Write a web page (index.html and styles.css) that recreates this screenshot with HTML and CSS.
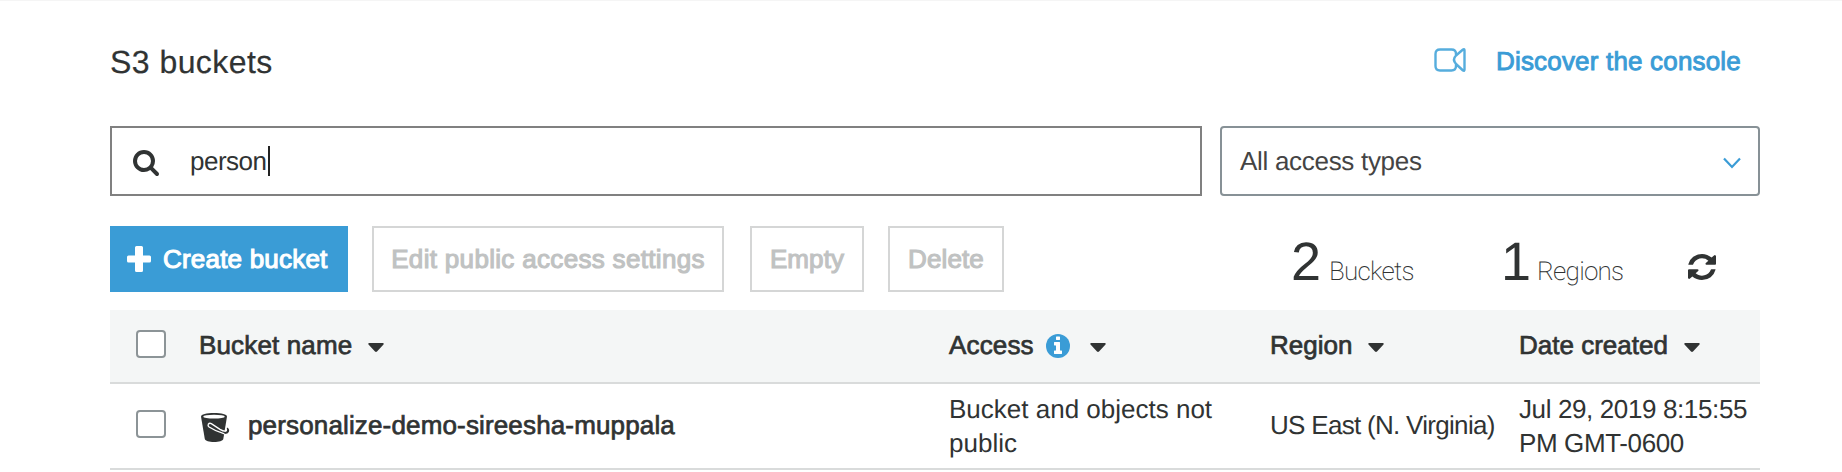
FILE: index.html
```html
<!DOCTYPE html>
<html lang="en">
<head>
<meta charset="utf-8">
<title>S3 buckets</title>
<link rel="stylesheet" href="styles.css">
</head>
<body>
<main class="page">
  <header class="top">
    <h1 class="title">S3 buckets</h1>
    <a class="discover">
      <svg class="camera" viewBox="0 0 32 24"><path d="M22 7.500V6q0-4.500-4.500-4.500H6Q1.500 1.500 1.500 6v12q0 4.500 4.500 4.500h11.500q4.500 0 4.500-4.500v-1.500M22 7.500l7-6q1.500-.8 1.500 1v19q0 1.800-1.500 1l-7-6.500q-4-4.500 0-8.500z"/></svg>
      <span class="discover-text">Discover the console</span>
    </a>
  </header>
  <section class="filters">
    <div class="search">
      <svg class="search-icon" viewBox="64 128 1664 1664"><path d="M1216 832q0-185-131.500-316.500t-316.500-131.500-316.500 131.500-131.500 316.500 131.500 316.500 316.500 131.500 316.500-131.500 131.500-316.500zm512 832q0 52-38 90t-90 38q-54 0-90-38l-343-342q-179 124-399 124-143 0-273.500-55.500t-225-150-150-225-55.500-273.500 55.500-273.500 150-225 225-150 273.500-55.500 273.500 55.500 225 150 150 225 55.500 273.500q0 220-124 399l343 343q37 37 37 90z"/></svg>
      <span class="query">person</span><span class="cursor"></span>
    </div>
    <div class="select">
      <span class="select-text">All access types</span>
      <svg class="chevron" viewBox="0 0 18 12"><path d="M1 1.500l8 8.500 8-8.500"/></svg>
    </div>
  </section>
  <section class="toolbar">
    <button class="btn primary"><svg class="plus" viewBox="0 0 24 26"><path d="M9.500 0h5q1.500 0 1.500 1.500V9.500h6.500q1.500 0 1.500 1.500v4q0 1.500-1.500 1.500H16v8q0 1.500-1.500 1.500h-5Q8 26 8 24.500v-8H1.500Q0 16.500 0 15v-4q0-1.500 1.500-1.500H8V1.500Q8 0 9.500 0z"/></svg><span>Create bucket</span></button>
    <button class="btn edit">Edit public access settings</button>
    <button class="btn empty">Empty</button>
    <button class="btn delete">Delete</button>
    <div class="stats">
      <span class="num num-buckets">2</span><span class="unit unit-buckets">Buckets</span>
      <span class="num num-regions">1</span><span class="unit">Regions</span>
    </div>
    <svg class="refresh" viewBox="0 0 1536 1536" preserveAspectRatio="none"><path d="M1511 928q0 5-1 7-64 268-268 434.500t-478 166.500q-146 0-282.500-55t-243.500-157l-129 129q-19 19-45 19t-45-19-19-45v-448q0-26 19-45t45-19h448q26 0 45 19t19 45-19 45l-137 137q71 66 161 102t187 36q134 0 250-65t186-179q11-17 53-117 8-23 30-23h192q13 0 22.500 9.500t9.500 22.500zm25-800v448q0 26-19 45t-45 19h-448q-26 0-45-19t-19-45 19-45l138-138q-148-137-349-137-134 0-250 65t-186 179q-11 17-53 117-8 23-30 23h-199q-13 0-22.500-9.500t-9.500-22.500v-7q65-268 270-434.500t480-166.500q146 0 284 55.500t245 156.500l130-129q19-19 45-19t45 19 19 45z"/></svg>
  </section>
  <section class="table">
    <div class="row head">
      <span class="check"></span>
      <div class="cell"><span class="h-name">Bucket name</span><svg class="caret" viewBox="0 0 16 9"><path d="M1 0h14q1.500.5.5 1.500L9 8.500q-1 .8-2 0L.5 1.500Q-.5.5 1 0z"/></svg></div>
      <div class="cell"><span class="h-access">Access</span><svg class="info" viewBox="128 128 1536 1536"><path class="info-bg" d="M1664 896a768 768 0 1 1-1536 0a768 768 0 1 1 1536 0z"/><path class="info-fg" d="M1152 1376v-160q0-14-9-23t-23-9h-96v-512q0-14-9-23t-23-9h-320q-14 0-23 9t-9 23v160q0 14 9 23t23 9h96v320h-96q-14 0-23 9t-9 23v160q0 14 9 23t23 9h448q14 0 23-9t9-23zm-128-896v-160q0-14-9-23t-23-9h-192q-14 0-23 9t-9 23v160q0 14 9 23t23 9h192q14 0 23-9t9-23z"/></svg><svg class="caret caret-access" viewBox="0 0 16 9"><path d="M1 0h14q1.500.5.5 1.500L9 8.500q-1 .8-2 0L.5 1.500Q-.5.5 1 0z"/></svg></div>
      <div class="cell"><span class="h-region">Region</span><svg class="caret" viewBox="0 0 16 9"><path d="M1 0h14q1.500.5.5 1.500L9 8.500q-1 .8-2 0L.5 1.500Q-.5.5 1 0z"/></svg></div>
      <div class="cell"><span class="h-date">Date created</span><svg class="caret" viewBox="0 0 16 9"><path d="M1 0h14q1.500.5.5 1.500L9 8.500q-1 .8-2 0L.5 1.500Q-.5.5 1 0z"/></svg></div>
    </div>
    <div class="row item">
      <span class="check"></span>
      <div class="cell name"><svg class="bucket" viewBox="0 0 28 29"><path class="bucket-body" d="M0 3.500C0 1.300 5.500 0 13 0s13 1.300 13 3.500L22.300 26c-.6 2-4.300 3-9.300 3s-8.500-1-9.200-3z"/><ellipse class="bucket-rim" cx="13" cy="3.700" rx="10.800" ry="1.900"/><path class="handle" d="M22 19.800q4 .6 4.800-1.300.8-2-1-3.200"/><path class="handle-gap" d="M25 15.500q1.300 2.500-.8 2.700-2.200 0-5.200-1.800L10.300 10.600q-1.800-1-3 .6-.8 1.500.8 2.800 6.400 4.300 15.400 6.800"/></svg><span class="bucket-name">personalize-demo-sireesha-muppala</span></div>
      <div class="cell"><span>Bucket and objects not<br>public</span></div>
      <div class="cell"><span class="region">US East (N. Virginia)</span></div>
      <div class="cell"><span class="date">Jul 29, 2019 8:15:55<br>PM GMT-0600</span></div>
    </div>
  </section>
</main>
</body>
</html>
```
FILE: styles.css
```css
* { box-sizing: border-box; }
body {
  margin: 0;
  background: #fff;
  color: #303333;
  font: 26px/34px "Liberation Sans", Arial, sans-serif;
  text-rendering: geometricPrecision;
}
svg { display: block; flex: none; overflow: visible; fill: #303333; }
.page { height: 472px; padding: 0 82px 0 110px; border-top: 1px solid #f5f5f5; overflow: hidden; }
.top { display: flex; justify-content: space-between; height: 125px; padding-top: 43px; }
.title { margin: -1px 0 0; font-size: 32px; line-height: 38px; font-weight: 400; letter-spacing: .45px; -webkit-text-stroke: .2px; }
.discover { display: flex; width: 326px; color: #3a9cd6; }
.camera { width: 32px; height: 24px; margin: 4px 30px 0 0; fill: none; stroke: #56addd; stroke-width: 2.4; stroke-linejoin: round; }
.discover-text { -webkit-text-stroke: .9px; letter-spacing: .18px; }
.filters { display: flex; gap: 18px; height: 100px; }
.search { display: flex; align-items: center; width: 1092px; height: 70px; padding-left: 21px; border: 2px solid #808080; }
.search-icon { width: 26px; height: 26px; margin: 24px 31px 20px 0; }
.query { margin-right: 1px; letter-spacing: -.5px; }
.cursor { width: 2px; height: 30px; background: #222; }
.select { display: flex; align-items: center; justify-content: space-between; width: 540px; height: 70px; padding: 0 17px 0 18px; border: 2px solid #879196; border-radius: 4px; color: #444; }
.select-text { letter-spacing: -.3px; }
.chevron { width: 18px; height: 12px; margin-top: 4px; fill: none; stroke: #3a9cd6; stroke-width: 2.2; }
.toolbar { display: flex; height: 84px; }
.btn { display: flex; flex: none; align-items: center; justify-content: center; height: 66px; padding: 0; border: 2px solid #d5d6d6; border-radius: 0; background: #fff; color: #c0c2c2; font: 26px/34px "Liberation Sans", Arial, sans-serif; -webkit-text-stroke: 1.1px; letter-spacing: .1px; }
.primary { justify-content: flex-start; width: 238px; margin-right: 24px; padding-left: 17px; border: 0; background: #3a9cd6; color: #fff; letter-spacing: .2px; }
.plus { width: 24px; height: 26px; margin-right: 12px; fill: #fff; stroke: none; }
.edit { width: 352px; margin-right: 26px; letter-spacing: .32px; }
.empty { width: 114px; margin-right: 24px; }
.delete { width: 116px; }
.stats { display: flex; align-items: baseline; width: 684px; height: 66px; padding: 6px 0 0 287px; }
.num { font-size: 54px; line-height: 60px; }
.num-buckets { width: 38px; }
.num-regions { width: 36px; }
.unit { font: 200 26px/34px Roboto, sans-serif; letter-spacing: -.75px; }
.unit-buckets { width: 172px; }
.refresh { width: 28px; height: 26px; margin-top: 28px; }
.table { width: 1650px; }
.row { display: grid; grid-template-columns: 26px 63px 750px 321px 249px 241px; align-items: center; border-bottom: 2px solid #d9dbdb; }
.check { grid-column: 2; width: 30px; height: 28px; border: 2px solid #8c9497; border-radius: 4px; background: #fff; }
.cell { display: flex; align-items: center; white-space: nowrap; }
.head { height: 74px; background: #f4f6f6; }
.head .cell { margin-top: -2px; }
.head .cell span { -webkit-text-stroke: .7px; }
.head .check { margin-top: -4px; }
.caret { width: 16px; height: 9px; margin: 4px 0 0 16px; }
.head .h-name { letter-spacing: .15px; }
.head .h-access { letter-spacing: .15px; }
.info { width: 24px; height: 24px; margin: 2px 0 0 12px; }
.info-bg { fill: #3a9cd6; }
.info-fg { fill: #fff; }
.caret-access { width: 18px; margin-left: 19px; }
.item { height: 86px; }
.item .check { margin-top: -4px; }
.bucket { width: 28px; height: 29px; margin: 2px 0 0 2px; }
.bucket-rim { fill: #fff; }
.handle-gap { fill: none; stroke: #fff; stroke-width: 1.3; }
.handle { fill: none; stroke: #303333; stroke-width: 2.2; }
.bucket-name { margin: -2px 0 0 19px; -webkit-text-stroke: .7px; letter-spacing: .15px; }
.region { margin-top: -2px; letter-spacing: -.7px; }
.date { letter-spacing: -.38px; }
```
